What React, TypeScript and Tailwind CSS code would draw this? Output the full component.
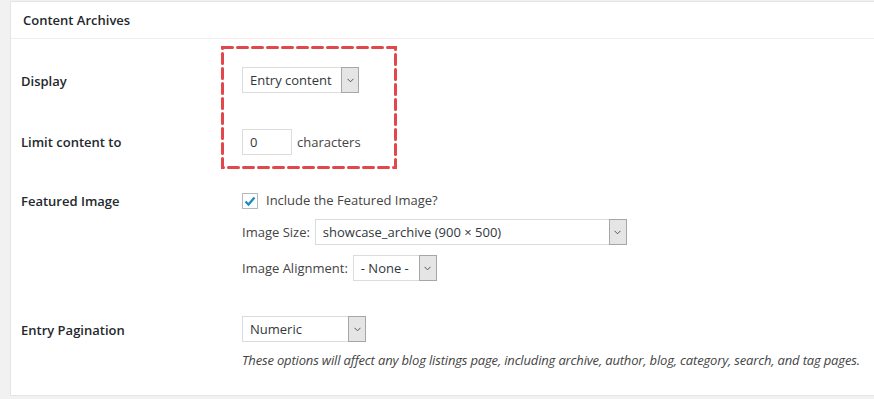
import React from 'react';

const font = { fontFamily: '"Open Sans", "Liberation Sans", sans-serif' };

function Chevron() {
  return (
    <svg width="7" height="5" viewBox="0 0 7 5" className="block">
      <path d="M0.5 0.8 L3.5 3.8 L6.5 0.8" fill="none" stroke="#555" strokeWidth="1" />
    </svg>
  );
}

function Select({ value, width }: { value: string; width: string }) {
  return (
    <div className={`flex h-[26px] ${width} items-stretch border border-[#dcdcdc] bg-white`}>
      <span className="flex flex-1 items-center pt-[2px] pl-[7px] text-[13px] text-[#32373c]">{value}</span>
      <span className="m-[-1px] flex w-[18px] items-center justify-center border border-[#a6a6a6] bg-[#e5e5e5]">
        <Chevron />
      </span>
    </div>
  );
}

export default function App() {
  return (
    <div className="h-[399px] w-[874px] overflow-hidden bg-[#f1f1f1] pt-px pl-[10px]" style={font}>
      <div className="relative h-[395px] w-[880px] border border-[#e5e5e5] bg-white">
        {/* Cabecera */}
        <div className="flex h-[37px] items-center border-b border-[#eeeeee] pt-[2px] pl-[12px]">
          <h3 className="text-[13px] font-semibold text-[#23282d]">Content Archives</h3>
        </div>

        <div className="pt-[28px] pl-[10px] text-[13px] text-[#444]">
          {/* Display */}
          <div className="flex items-center">
            <div className="w-[221px] pt-[3px] font-semibold text-[#23282d]">Display</div>
            <Select value="Entry content" width="w-[117px]" />
          </div>

          {/* Limit */}
          <div className="mt-[36px] flex items-center">
            <div className="w-[221px] pt-[2px] font-semibold text-[#23282d]">Limit content to</div>
            <div className="flex h-[26px] w-[50px] items-center border border-[#dcdcdc] pt-[2px] pl-[7px] text-[#32373c]">0</div>
            <span className="ml-[5px] pt-[2px]">characters</span>
          </div>

          {/* Featured Image */}
          <div className="mt-[38px] flex">
            <div className="w-[221px] leading-[16px] font-semibold text-[#23282d]">Featured Image</div>
            <div className="flex flex-col">
              <div className="flex h-[16px] items-center">
                <span className="flex h-[16px] w-[16px] items-center justify-center border border-[#b4b9be] bg-white">
                  <svg width="12" height="11" viewBox="0 0 12 11">
                    <path d="M1.5 5.5 L4.5 8.5 L10.5 1.5" fill="none" stroke="#1e8cbe" strokeWidth="2.3" />
                  </svg>
                </span>
                <span className="ml-[8px]">Include the Featured Image?</span>
              </div>
              <div className="mt-[10px] flex items-center">
                <span className="mr-[5px] pt-[2px]">Image Size:</span>
                <Select value="showcase_archive (900 × 500)" width="w-[312px]" />
              </div>
              <div className="mt-[10px] flex items-center">
                <span className="mr-[5px] pt-[2px]">Image Alignment:</span>
                <Select value="- None -" width="w-[84px]" />
              </div>
            </div>
          </div>

          {/* Entry Pagination */}
          <div className="mt-[35px] flex">
            <div className="flex h-[26px] w-[221px] items-center pt-[3px] font-semibold text-[#23282d]">Entry Pagination</div>
            <div className="flex flex-col">
              <Select value="Numeric" width="w-[124px]" />
              <p className="mt-[9px] text-[13px] tracking-[-0.16px] whitespace-nowrap text-[#444] italic">
                These options will affect any blog listings page, including archive, author, blog, category, search, and tag pages.
              </p>
            </div>
          </div>
        </div>

        {/* Recuadro de anotación */}
        <svg className="pointer-events-none absolute top-[44px] left-[210px]" width="176" height="123" viewBox="0 0 176 123">
          <rect
            x="1.5"
            y="1.5"
            width="173"
            height="120"
            fill="none"
            stroke="#e2474c"
            strokeWidth="3"
            strokeDasharray="10 5"
            strokeLinecap="round"
          />
        </svg>
      </div>
    </div>
  );
}
